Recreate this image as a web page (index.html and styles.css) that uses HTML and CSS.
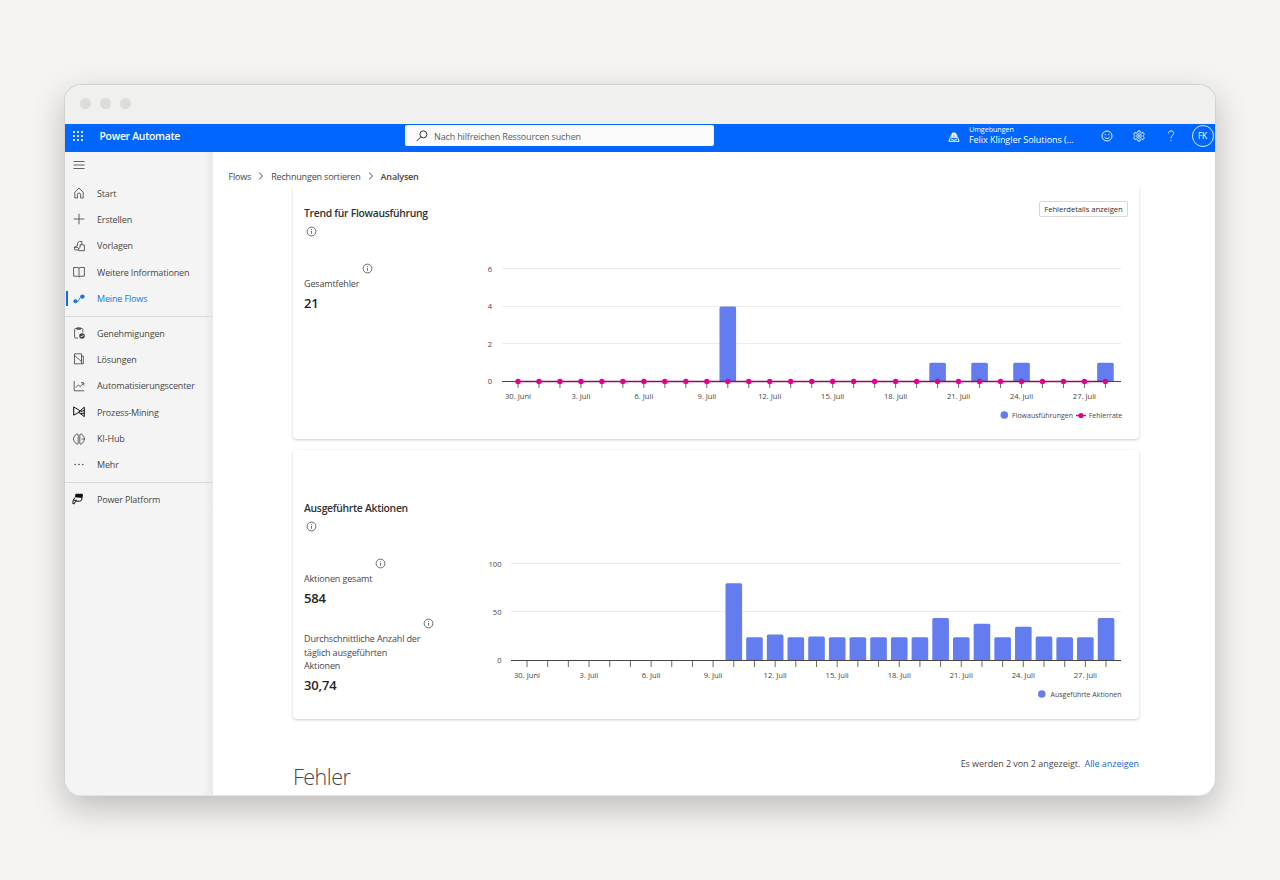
FILE: index.html
```html
<!DOCTYPE html>

<html lang="de">

<head>
  <meta charset="UTF-8">
  <meta name="viewport" content="width=device-width, initial-scale=1">

  <title>Power Automate - Analysen</title>

  <link rel="stylesheet" href="styles.css">
</head>

<body>
  <svg width="0" height="0" class="defs">
    <symbol id="info" viewBox="0 0 11 11">
      <circle cx="5.5" cy="5.5" r="4.4" />
      <path d="M5.5 5v2.7" />
      <path d="M5.5 3.2v.9" />
    </symbol>
  </svg>

  <div class="window">
    <div class="titlebar"><i></i><i></i><i></i></div>

    <header>
      <svg class="waffle" viewBox="0 0 10 10">
        <path d="M0 1h2M4 1h2M8 1h2M0 5h2M4 5h2M8 5h2M0 9h2M4 9h2M8 9h2" />
      </svg>
      <span class="brand">Power Automate</span>
      <div class="search">
        <svg viewBox="0 0 12 12"><circle cx="7.4" cy="4.3" r="3.5" /><path d="M4.8 6.9L.7 11" /></svg>
        <span>Nach hilfreichen Ressourcen suchen</span>
      </div>
      <div class="environment">
        <svg viewBox="0 0 12 12">
          <path d="M3.2 6a2.9 2.9 0 1 1 5.6 0M3.2 3.9h5.6M6 1.3V6M4.6 1.7V6M7.4 1.7V6M2.4 6.3h7.2l1.5 4H.9zM3 8.2h1.2l.8.9h2l.8-.9H9" />
        </svg>
        <div>
          <small>Umgebungen</small>
          <span>Felix Klingler Solutions (...</span>
        </div>
      </div>
      <div class="tools">
        <svg viewBox="0 0 12 12">
          <circle cx="6" cy="6" r="5" />
          <path d="M3.5 7.2c1 1.8 4 1.8 5 0M4.2 4v1.1M7.8 4v1.1" />
        </svg>
        <svg viewBox="0 0 12 12">
          <path d="M5 .9h2l.4 1.5 1.2.6 1.5-.6 1.2 1.8-1 1.2v1.2l1 1.2-1.2 1.8-1.5-.6-1.2.6L7 11.1H5l-.4-1.5L3.4 9l-1.5.6L.7 7.8l1-1.2V5.4l-1-1.2 1.2-1.8 1.5.6 1.2-.6z" />
          <circle cx="6" cy="6" r="2.3" />
          <circle cx="6" cy="6" r=".6" />
        </svg>
        <svg viewBox="0 0 12 12">
          <path d="M3.4 3.4C3.4 1.8 4.5.9 6 .9s2.700 1 2.700 2.400C8.700 5.300 6 5.600 6 8.300M6 9.900v1.200" />
        </svg>
      </div>
      <div class="avatar">FK</div>
    </header>

    <div class="page">
      <nav>
        <div class="item">
          <svg viewBox="0 0 12 12"><path d="M.5 2.5h11M.5 6h11M.5 9.5h11" /></svg>
        </div>
        <div class="item first">
          <svg viewBox="0 0 12 12"><path d="M1.8 5.2L6 1l4.2 4.2V11H7.6V7.6a1.600 1.600 0 0 0-3.200 0V11H1.800z" /></svg>
          <span>Start</span>
        </div>
        <div class="item">
          <svg viewBox="0 0 12 12"><path d="M.7 6h10.6M6 .7v10.6" /></svg>
          <span>Erstellen</span>
        </div>
        <div class="item">
          <svg viewBox="0 0 12 12"><path d="M4.5 3.2l2-1.8 2.3.1v3.2l2.6.3v5.7H5.6V8M4.5 3.2v2.5L1.2 7.3l.7 2.600 2.500.3L7.200 7V4.700h1.600M1.200 7.300h4" /></svg>
          <span>Vorlagen</span>
        </div>
        <div class="item">
          <svg viewBox="0 0 12 12"><path d="M.6 1.5h4.2Q6 1.5 6 2.6q0-1.1 1.2-1.1h4.2v8.7H7.2L6 11l-1.2-.8H.6zM6 2.6V11" /></svg>
          <span>Weitere Informationen</span>
        </div>
        <div class="item active">
          <svg viewBox="0 0 12 12">
            <path d="M2.5 8.5h1.6q1.4 0 1.9-1.9t1.9-2.2" />
            <circle class="solid" cx="2.4" cy="8.2" r="2" />
            <circle class="solid" cx="9.4" cy="3.6" r="2.2" />
          </svg>
          <span>Meine Flows</span>
        </div>
        <hr>
        <div class="item">
          <svg viewBox="0 0 12 12">
            <path d="M5 11H2.6Q1.6 11 1.6 10V2.5q0-1 1-1h6.2q1 0 1 1v3M3.8.8h3.8v1.600H3.800z" />
            <circle class="solid" cx="9" cy="9" r="2.8" />
            <path class="check" d="M7.7 9l1 1 1.7-1.9" />
          </svg>
          <span>Genehmigungen</span>
        </div>
        <div class="item">
          <svg viewBox="0 0 12 12"><path d="M1.5.8h7v10h-7zM1.5 2.500l7 6M8.500 3h1.800v7.800H8.500" /></svg>
          <span>Lösungen</span>
        </div>
        <div class="item">
          <svg viewBox="0 0 12 12"><path d="M1.2 1v9.8h10M2.8 7.6l2.5-2.7 2 1.8L10.6 3M8 2.7h2.8v2.7" /></svg>
          <span>Automatisierungscenter</span>
        </div>
        <div class="item">
          <svg viewBox="0 0 12 12" class="dark"><path d="M.7.9v8.3L6.6 6V4.5zM11.3 1.2L5.500 6.200l5.800 4.400zM7.500 5.500l3.800-1M7.500 7.300h3.800" /></svg>
          <span>Prozess-Mining</span>
        </div>
        <div class="item">
          <svg viewBox="0 0 12 12"><path d="M5.2 2Q5 .8 3.8 1T2.3 2.6Q.6 3 .9 4.8-.2 6 .9 7.3.8 9 2.4 9.5q.6 1.7 1.8 1.6T5.2 10zM6.8 2Q7 .8 8.2 1t1.5 1.6q1.7.4 1.4 2.2 1.1 1.2 0 2.5.1 1.7-1.5 2.2-.6 1.7-1.8 1.6T6.8 10zM8.5 6H11" /></svg>
          <span>KI-Hub</span>
        </div>
        <div class="item">
          <svg viewBox="0 0 12 12">
            <circle class="solid" cx="2.2" cy="5.5" r=".8" />
            <circle class="solid" cx="6" cy="5.5" r=".8" />
            <circle class="solid" cx="9.8" cy="5.5" r=".8" />
          </svg>
          <span>Mehr</span>
        </div>
        <hr>
        <div class="item">
          <svg viewBox="0 0 12 12" class="dark platform">
            <path class="solid" d="M4 .8h6q1.5.5.9 2L10.3 5 3 4.2 3.3 1.6z" />
            <path d="M2.8 4.6L1.2 7.5.8 10.6l1.4.3L3.6 8.2h4.2q1.3 0 1.7-1.2l.7-2.4M1.5 7.4l3.3-.2" />
          </svg>
          <span>Power Platform</span>
        </div>
      </nav>

      <main>
        <div class="breadcrumb">
          <span>Flows</span>
          <svg viewBox="0 0 6 8"><path d="M1.2.8L4.5 4 1.2 7.2" /></svg>
          <span>Rechnungen sortieren</span>
          <svg viewBox="0 0 6 8"><path d="M1.2.8L4.5 4 1.2 7.2" /></svg>
          <b>Analysen</b>
        </div>

        <div class="content">
          <section class="card cut">
            <div class="card-head">
              <h2>Trend für Flowausführung</h2>
              <button type="button">Fehlerdetails anzeigen</button>
            </div>
            <svg class="info"><use href="#info" /></svg>
            <div class="card-body">
              <div class="stats">
                <div class="stat">
                  <svg class="info"><use href="#info" /></svg>
                  <p>Gesamtfehler</p>
                  <strong>21</strong>
                </div>
              </div>
              <svg class="chart" id="runs" width="648" height="165"></svg>
            </div>
          </section>

          <section class="card">
            <div class="card-head">
              <h2>Ausgeführte Aktionen</h2>
            </div>
            <svg class="info"><use href="#info" /></svg>
            <div class="card-body">
              <div class="stats">
                <div class="stat">
                  <svg class="info"><use href="#info" /></svg>
                  <p>Aktionen gesamt</p>
                  <strong>584</strong>
                </div>
                <div class="stat">
                  <svg class="info"><use href="#info" /></svg>
                  <p>Durchschnittliche Anzahl der<br>täglich ausgeführten<br>Aktionen</p>
                  <strong>30,74</strong>
                </div>
              </div>
              <svg class="chart" id="actions" width="648" height="150"></svg>
            </div>
          </section>

          <div class="errors">
            <h1>Fehler</h1>
            <div class="more">Es werden 2 von 2 angezeigt. <a href="#">Alle anzeigen</a></div>
          </div>
        </div>
      </main>
    </div>
  </div>

  <script src="charts.js"></script>
</body>

</html>
```

FILE: styles.css
```css
* {
  box-sizing: border-box;
}

body {
  margin: 0;
  height: 880px;
  padding: 84px 64px 0;
  overflow: hidden;
  background: #f5f4f2;
  color: #484644;
  font-family: "Open Sans", "Noto Sans", sans-serif;
  font-size: 9px;
  letter-spacing: -0.15px;
}

h1,
h2,
p {
  margin: 0;
}

svg {
  flex: none;
  fill: none;
  stroke: currentColor;
}

.defs {
  display: none;
}

.window {
  display: flex;
  flex-direction: column;
  width: 1152px;
  height: 712px;
  overflow: hidden;
  border: 1px solid #d2d2d0;
  border-bottom-color: #e4e4e4;
  border-radius: 17px;
  background: #fff;
  box-shadow: 0 12px 34px rgba(0, 0, 0, 0.23);
}

.titlebar {
  display: flex;
  gap: 9px;
  height: 39px;
  padding: 13.4px 0 0 15.4px;
  background: #f0f0ef;

  i {
    width: 11px;
    height: 11px;
    border-radius: 50%;
    background: #dcdcdb;
  }
}

header {
  display: flex;
  align-items: center;
  height: 28px;
  padding-left: 8px;
  background: #0066ff;
  color: #fff;
}

.waffle {
  width: 10px;
  height: 10px;
  margin-bottom: 4px;
  stroke-width: 2;
  opacity: 0.85;
}

.brand {
  width: 305.5px;
  margin: -4px 0 0 16.5px;
  font-size: 10.4px;
  font-weight: 600;
  letter-spacing: -0.27px;
}

.search {
  display: flex;
  align-items: center;
  width: 309px;
  height: 21px;
  margin-bottom: 5px;
  padding-left: 10.5px;
  gap: 6.5px;
  border-radius: 2px;
  background: #fafafa;
  color: #605e5c;

  svg {
    width: 12px;
    height: 12px;
    color: #333;
  }

  span {
    padding-top: 1px;
  }
}

.environment {
  display: flex;
  align-items: center;
  width: 153px;
  margin: -7px 0 0 234px;
  gap: 9px;

  svg {
    width: 12px;
    height: 12px;
    margin-top: 4px;
  }

  small,
  span {
    display: block;
    line-height: 10.5px;
    white-space: nowrap;
  }

  span {
    letter-spacing: -0.05px;
  }

  small {
    font-size: 7.2px;
    letter-spacing: -0.05px;
  }
}

.tools {
  display: flex;
  gap: 20px;
  margin-bottom: 4px;

  svg {
    width: 12px;
    height: 12px;
    stroke-width: 0.9;
  }
}

.avatar {
  width: 22px;
  height: 22px;
  margin: 0 0 4px 14.5px;
  border: 1px solid #dce9ff;
  border-radius: 50%;
  font-size: 8.4px;
  line-height: 20px;
  text-align: center;
}

.page {
  display: flex;
  flex: 1;
  min-height: 0;
}

nav {
  width: 148px;
  background: linear-gradient(to right, #f4f4f4 138px, #e9e9e9);

  hr {
    height: 1px;
    margin: 4px 0 3px;
    border: 0;
    background: #d8d8d8;
  }
}

.item {
  display: flex;
  align-items: center;
  height: 26.4px;
  padding-left: 7.5px;
  gap: 12.5px;

  svg {
    width: 12px;
    height: 12px;
    stroke-width: 0.85;
  }

  .dark {
    color: #111;
    stroke-width: 1;
  }

  .platform {
    margin: 0 1px 0 -1px;
  }
}

.first {
  margin-top: 1.5px;
}

.active {
  position: relative;
  color: #1a73e8;

  &::before {
    content: "";
    position: absolute;
    left: 1px;
    width: 2px;
    height: 15px;
    background: #1267f2;
  }
}

.solid {
  fill: currentColor;
  stroke: none;
}

.check {
  stroke: #fff;
}

main {
  flex: 1;
}

.breadcrumb {
  display: flex;
  align-items: center;
  height: 35px;
  padding: 13px 0 0 15.5px;
  gap: 7px;
  letter-spacing: -0.18px;

  svg {
    width: 6px;
    height: 8px;
  }

  b {
    font-weight: 600;
  }
}

.content {
  padding: 0 76px 0 80px;
}

.card {
  height: 269px;
  padding: 46px 11px 0;
  border-radius: 4px;
  box-shadow: 0 1px 3px rgba(0, 0, 0, 0.2);
}

/* scrolled partly below the breadcrumb */
.cut {
  height: 252px;
  margin-bottom: 11px;
  padding-top: 14px;
  border-radius: 0 0 4px 4px;
  clip-path: inset(0 -5px -5px);
}

.card-head {
  display: flex;
  justify-content: space-between;
  height: 25px;

  h2 {
    color: #323130;
    font-size: 10.4px;
    font-weight: 600;
    line-height: 24px;
    letter-spacing: -0.3px;
  }

  button {
    width: 89px;
    height: 16px;
    padding: 0;
    border: 1px solid #d8d8d8;
    border-radius: 2px;
    background: #fff;
    color: #323130;
    font: inherit;
    font-size: 7.7px;
    letter-spacing: -0.08px;
  }
}

.info {
  display: block;
  width: 11px;
  height: 11px;
  stroke-width: 0.8;
}

.card > .info {
  margin: 0 0 25px 2px;
}

.card-body {
  display: flex;
}

.stats {
  width: 176px;
}

.stat {
  width: fit-content;
  margin-bottom: 5.5px;
  padding-right: 14px;

  .info {
    margin: 1px -14px 3px auto;
  }

  p {
    line-height: 13.3px;
  }

  strong {
    display: block;
    color: #252423;
    font-size: 13px;
    font-weight: 600;
    line-height: 27.5px;
  }
}

.chart {
  overflow: visible;
  letter-spacing: 0;

  text {
    fill: #484644;
    stroke: none;
    font-size: 7.6px;
    text-anchor: middle;
  }

  .scale {
    text-anchor: end;
  }

  .legend {
    font-size: 7px;
  }

  .grid {
    stroke: #ebebeb;
  }

  .axis,
  .tick {
    stroke: #484644;
  }

  .tick {
    stroke-width: 0.8;
  }

  .bar {
    fill: #637cef;
    stroke: none;
  }

  .rate {
    stroke: #8f0a5c;
    stroke-width: 1.4;
  }

  .dot {
    fill: #e3008c;
    stroke: none;
  }

  .key {
    stroke: #e3008c;
    stroke-width: 1.5;
  }
}

.errors {
  display: flex;
  justify-content: space-between;
  padding-top: 38px;

  h1 {
    margin-top: 5px;
    font-size: 21.5px;
    font-weight: 300;
    line-height: 30px;
    letter-spacing: -0.5px;
  }

  a {
    margin-left: 2px;
    color: #1267d8;
    text-decoration: none;
  }
}

.more {
  letter-spacing: -0.05px;
}
```

FILE: charts.js
```javascript
const labels = ["30. Juni", "3. Juli", "6. Juli", "9. Juli", "12. Juli",
  "15. Juli", "18. Juli", "21. Juli", "24. Juli", "27. Juli"];

const runs = new Array(29).fill(0);
runs[10] = 4;
runs[20] = runs[22] = runs[24] = runs[28] = 1;

const actions = new Array(10).fill(0).concat(
  [80, 24, 27, 24, 25, 24, 24, 24, 24, 24, 44, 24, 38, 24, 35, 25, 24, 24, 44]);

function line(cls, x1, y1, x2, y2) {
  return `<line class="${cls}" x1="${x1}" y1="${y1}" x2="${x2}" y2="${y2}"/>`;
}

function text(cls, x, y, value) {
  return `<text class="${cls}" x="${x}" y="${y}">${value}</text>`;
}

function draw(id, data, o) {
  let out = "";

  o.scale.forEach(value => {
    const y = o.base - value * o.unit;
    if (value > 0) {
      out += line("grid", o.left, Math.round(y) - 0.5, 641, Math.round(y) - 0.5);
    }
    out += text("scale", o.scaleX, y + 2.5, value);
  });

  data.forEach((value, i) => {
    const x = o.first + i * o.step;
    const h = value * o.unit;
    if (value > 0) {
      out += `<path class="bar" d="M${x - 8.3} ${o.base}v${1.5 - h}q0-1.5 1.5-1.5h13.6q1.5 0 1.5 1.5v${h - 1.5}z"/>`;
    }
    out += line("tick", x, o.base, x, o.base + 6.5);
    if (i % 3 === 0) {
      out += text("day", x, o.base + 17.5, labels[i / 3]);
    }
  });

  out += line("axis", o.left, o.base, 641, o.base);

  if (o.rate) {
    out += line("rate", o.first, o.base, o.first + 28 * o.step, o.base);
    data.forEach((_, i) => {
      out += `<circle class="dot" cx="${o.first + i * o.step}" cy="${o.base}" r="2.7"/>`;
    });
  }

  document.getElementById(id).innerHTML = out + o.legend;
}

draw("runs", runs, {
  base: 119.5, unit: 18.75, scale: [0, 2, 4, 6], scaleX: 12,
  left: 22, first: 38, step: 20.98, rate: true,
  legend: `<circle class="bar" cx="524.3" cy="153" r="3.8"/>`
    + text("legend", 562.5, 156, "Flowausführungen")
    + line("key", 596, 153.5, 606, 153.5)
    + `<circle class="dot" cx="601" cy="153.5" r="2.6"/>`
    + text("legend", 625.5, 156, "Fehlerrate"),
});

draw("actions", actions, {
  base: 103.5, unit: 0.965, scale: [0, 50, 100], scaleX: 21.5,
  left: 31, first: 47, step: 20.68,
  legend: `<circle class="bar" cx="561.8" cy="137" r="3.8"/>`
    + text("legend", 606, 140, "Ausgeführte Aktionen"),
});
```
